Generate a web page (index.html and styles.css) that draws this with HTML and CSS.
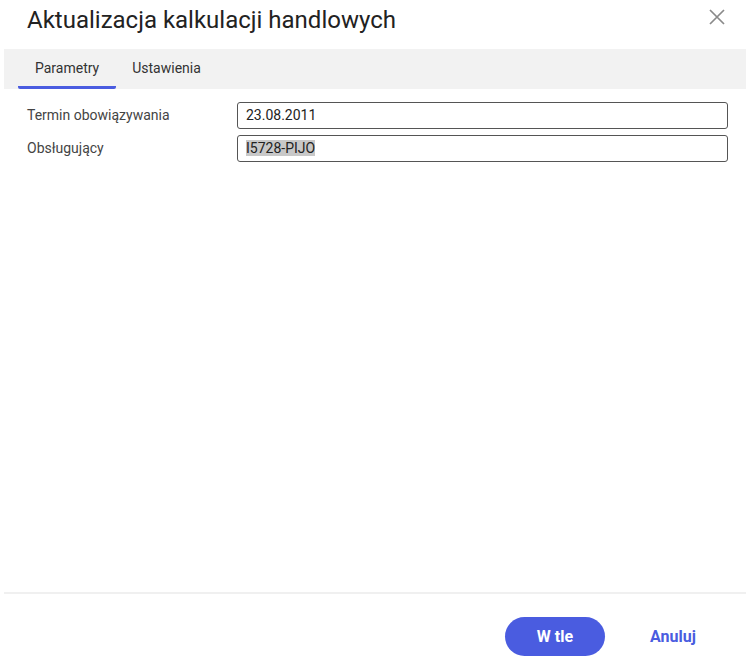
FILE: index.html
```html
<!DOCTYPE html>
<html>
  <head>
    <title>Aktualizacja kalkulacji handlowych</title>
    <link rel="stylesheet" href="styles.css">
  </head>
  <body>
    <div id="dialog">
      <div class="header">
        <h1 class="title">Aktualizacja kalkulacji handlowych</h1>
        <a href="#" class="close">
          <svg width="16" height="16" viewBox="0 0 16 16">
            <path d="M1 1 L15 15 M15 1 L1 15" stroke="#8a8a8a" stroke-width="1.7" fill="none"/>
          </svg>
        </a>
      </div>
      <div class="tabs">
        <a href="#" class="tab active">Parametry</a>
        <a href="#" class="tab">Ustawienia</a>
      </div>
      <div class="content">
        <div class="row">
          <label class="label">Termin obowiązywania</label>
          <div class="field">23.08.2011</div>
        </div>
        <div class="row">
          <label class="label">Obsługujący</label>
          <div class="field"><span class="selected">I5728-PIJO</span></div>
        </div>
      </div>
      <div class="footer">
        <a href="#" class="btn primary">W tle</a>
        <a href="#" class="btn link">Anuluj</a>
      </div>
    </div>
  </body>
</html>
```
FILE: styles.css
```css
body {
  margin: 0;
  background: #fff;
  font-family: Roboto, "Liberation Sans", sans-serif;
  color: #222;
}

#dialog {
  width: 746px;
  height: 667px;
  padding-left: 4px;
  box-sizing: border-box;
  display: flex;
  flex-direction: column;
}

.header {
  height: 49px;
  display: flex;
  justify-content: space-between;
  align-items: flex-start;
}

.title {
  margin: 4px 0 0 23px;
  font-size: 24px;
  font-weight: 400;
  line-height: 32px;
  color: #222;
}

.close {
  margin: 9px 21px 0 0;
  display: block;
  line-height: 0;
}

.tabs {
  height: 40px;
  background: #f2f2f2;
  display: flex;
  padding-left: 14px;
}

.tab {
  display: block;
  padding: 0 17px 0 16px;
  line-height: 39px;
  font-size: 14px;
  color: #333;
  text-decoration: none;
  border-bottom: 3px solid transparent;
  height: 37px;
}

.tab.active {
  padding: 0 17px;
  border-bottom-color: #4a5ce0;
  border-radius: 0 0 2px 2px;
}

.content {
  flex: 1;
  padding: 13px 18px 0 23px;
  border-bottom: 2px solid #f0f0f0;
}

.row {
  display: flex;
  align-items: flex-start;
  margin-bottom: 6px;
}

.label {
  width: 210px;
  font-size: 14px;
  line-height: 26px;
  color: #444;
}

.field {
  flex: 1;
  height: 27px;
  box-sizing: border-box;
  border: 1px solid #555;
  border-radius: 3px;
  padding: 0 8px;
  font-size: 14px;
  line-height: 25px;
  color: #222;
}

.selected {
  background: #c8c8c8;
}

.footer {
  height: 73px;
  display: flex;
  justify-content: flex-end;
  align-items: flex-start;
  padding: 23px 28px 0 0;
  box-sizing: border-box;
}

.btn {
  display: block;
  text-decoration: none;
  font-size: 16px;
  font-weight: 700;
  height: 39px;
  line-height: 39px;
  text-align: center;
}

.primary {
  width: 100px;
  border-radius: 20px;
  background: #4a5ce0;
  color: #fff;
  margin-right: 23px;
}

.link {
  width: 90px;
  color: #4a5ce0;
}
```
